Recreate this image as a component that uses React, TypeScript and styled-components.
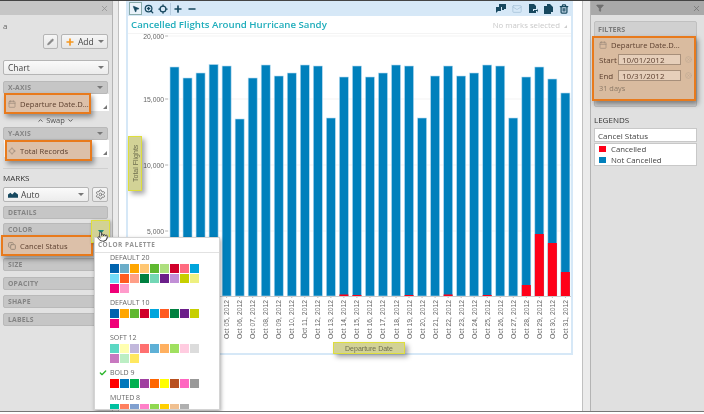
import React from "react";
import styled, { createGlobalStyle } from "styled-components";
import { Check, Pointer, Settings, ChevronUp, ChevronDown, Pencil, Plus, X, Minus, ZoomIn, Locate, MousePointer2, Mail, Trash2, Filter, Calendar, CircleX, Copy } from "lucide-react";

const GlobalStyle = createGlobalStyle`
  html, body { margin: 0; padding: 0; background: #fff; }
  body { font-family: "Open Sans", "Liberation Sans", sans-serif; }
`;

const barTops = [66, 77, 72, 63.5, 65, 118, 77, 64, 75, 72, 64, 65, 117, 76, 65, 76, 72, 64, 65, 117, 75, 65, 75, 72, 64, 65, 117, 76, 66, 78, 92];
const redTops: Record<number, number> = { 13: 293.5, 14: 294, 18: 294, 21: 293.5, 24: 294, 27: 284, 28: 233, 29: 242, 30: 271 };
const BASE_Y = 295;

const palettes = [
  { name: "Default 20", colors: ["#0063ae", "#6badc9", "#ffa600", "#ffc773", "#5fb830", "#addf7e", "#d0002a", "#ff6b80", "#00a5dc", "#72dcf8", "#ff5b21", "#ff9f88", "#008040", "#73d7b5", "#6b1f8a", "#c18fd6", "#c7cf00", "#eef080", "#f00078", "#ff9bcb"] },
  { name: "Default 10", colors: ["#0063ae", "#ffa600", "#5fb830", "#d0002a", "#00a5dc", "#ff5b21", "#008040", "#6b1f8a", "#c7cf00", "#f00078"] },
  { name: "Soft 12", colors: ["#5cd8c4", "#ffffb0", "#c2b8dc", "#ff7070", "#5eb0d6", "#ffb060", "#a0e060", "#ffcce0", "#dcdcdc", "#c878c0", "#bceec4", "#ffe860"] },
  { name: "Bold 9", checked: true, colors: ["#ff0000", "#0077bb", "#00b050", "#a040a0", "#ff6600", "#ffff00", "#b85020", "#ff66c0", "#999999"] },
  { name: "Muted 8", colors: ["#00c0a0", "#ff8060", "#80a0d0", "#ff80c8", "#90d850", "#ffd000", "#f0c090", "#b0b0b0"] },
];

const Shell = styled.div`
  position: relative;
  width: 704px;
  height: 412px;
  display: flex;
  overflow: hidden;
  background: #fff;
  border-top: 1px solid #444;
  border-bottom: 1px solid #777;
  box-sizing: border-box;
  color: #444;
  filter: blur(0.3px);
`;

const LeftPanel = styled.aside`
  width: 113px;
  flex: none;
  background: #e2e2e2;
  border-right: 1px solid #b4b4b4;
  box-sizing: border-box;
  padding: 0 4px 0 3px;
`;

const PanelHeader = styled.div`
  height: 14px;
  margin: 0 -4px 0 -3px;
  background: #c6c6c6;
  display: flex;
  align-items: center;
  justify-content: space-between;
  padding: 0 3px 0 5px;
  color: #8f8f8f;
`;

const RightHeader = styled(PanelHeader)`
  margin: 0 -7px 0 -3px;
  background: #a9a9a9;
  color: #707070;
`;

const CutLabel = styled.div`
  height: 19px;
  line-height: 21px;
  font-size: 8px;
  color: #666;
`;

const ButtonRow = styled.div`
  display: flex;
  justify-content: flex-end;
  gap: 3px;
`;

const ToolButton = styled.div<{ $w: number }>`
  width: ${(p) => p.$w}px;
  height: 15px;
  box-sizing: border-box;
  border: 1px solid #b5b5b5;
  border-radius: 2px;
  background: linear-gradient(#f6f6f6, #e6e6e6);
  display: flex;
  align-items: center;
  gap: 3px;
  padding: 0 3px;
  font-size: 8.5px;
  color: #444;
`;

const GearButton = styled(ToolButton)`
  justify-content: center;
  padding: 0;
`;

const Caret = styled.span`
  margin-left: auto;
  width: 0;
  height: 0;
  border-left: 3px solid transparent;
  border-right: 3px solid transparent;
  border-top: 3px solid #777;
`;

const Select = styled(ToolButton)<{ $top: number }>`
  margin-top: ${(p) => p.$top}px;
  background: linear-gradient(#fafafa, #ececec);
  padding: 0 4px;
`;

const MarksRow = styled.div`
  display: flex;
  gap: 3px;
  margin-top: 3px;
`;

const Well = styled.div<{ $top: number }>`
  position: relative;
  width: 104px;
  margin-top: ${(p) => p.$top}px;
`;

const WellBar = styled.div`
  height: 13px;
  box-sizing: border-box;
  width: 105px;
  background: #c6c6c6;
  border: 1px solid #b9b9b9;
  border-radius: 2px;
  padding: 0 4px;
  display: flex;
  align-items: center;
  justify-content: space-between;
  font-size: 6.8px;
  font-weight: 700;
  letter-spacing: 0.2px;
  color: #848484;
`;

const DropArea = styled.div`
  height: 17px;
  background: #fff;
  margin-right: -2px;
  margin-left: 1px;
  position: relative;
  &::after {
    content: "";
    position: absolute;
    right: 2px;
    bottom: 2px;
    border-left: 4px solid transparent;
    border-bottom: 4px solid #777;
  }
`;

const Highlight = styled.div<{ $left: number; $top: number; $w: number; $pad: number }>`
  position: absolute;
  left: ${(p) => p.$left}px;
  top: ${(p) => p.$top}px;
  width: ${(p) => p.$w}px;
  height: 21px;
  box-sizing: border-box;
  border: 2px solid #e87a1c;
  background: #dcc0a9;
  box-shadow: 2px 3px 5px rgba(0, 0, 0, 0.4);
  display: flex;
  align-items: center;
  gap: 4px;
  padding-left: ${(p) => p.$pad}px;
  font-size: 7.6px;
  color: #5d4030;
  white-space: nowrap;
  overflow: hidden;
  z-index: 2;
  svg {
    flex: none;
  }
`;

const SwapRow = styled.div`
  margin-top: 3px;
  height: 12px;
  display: flex;
  align-items: center;
  justify-content: center;
  gap: 2px;
  font-size: 7.5px;
  color: #555;
`;

const Separator = styled.div`
  height: 1px;
  margin-top: 11px;
  background: #cfcfcf;
`;

const MarksLabel = styled.div`
  margin-top: 2px;
  height: 13px;
  line-height: 13px;
  font-size: 8px;
  color: #333;
`;

const ColorWell = styled(Well)`
  height: 33px;
`;

const LeftGutter = styled.div`
  width: 13px;
  flex: none;
`;

const RightGutter = styled.div`
  width: 17px;
  flex: none;
  display: flex;
  justify-content: flex-end;
`;

const GutterBand = styled.div<{ $w: number }>`
  width: ${(p) => p.$w}px;
  height: 100%;
  background: #ebebeb;
  box-sizing: border-box;
`;

const LeftBand = styled(GutterBand)`
  border-right: 1px solid #c0c0c0;
`;

const RightBand = styled(GutterBand)`
  border-left: 1px solid #c0c0c0;
`;

const ChartPanel = styled.main`
  width: 447px;
  height: 354px;
  flex: none;
  box-sizing: border-box;
  border: 2px solid #d6e8f7;
  border-top: 0;
  background: #fff;
  display: flex;
  flex-direction: column;
`;

const Toolbar = styled.div`
  height: 15px;
  margin: 0 -2px;
  background: #d6e8f7;
  display: flex;
  align-items: center;
  padding: 0 4px 0 3px;
  color: #17485f;
  flex: none;
`;

const ToolGroup = styled.div`
  display: flex;
  align-items: center;
  gap: 4px;
`;

const SelectTool = styled.div`
  width: 13px;
  height: 13px;
  margin-right: -2px;
  box-sizing: border-box;
  border: 1px solid #8aa;
  background: #e9f2fa;
  display: flex;
  align-items: center;
  justify-content: center;
`;

const ToolDivider = styled.div`
  width: 1px;
  height: 12px;
  margin: 0 -2px;
  background: #b6ccdf;
`;

const RightTools = styled(ToolGroup)`
  margin-left: auto;
  gap: 6px;
`;

const TitleRow = styled.div`
  height: 17px;
  flex: none;
  display: flex;
  align-items: center;
  justify-content: space-between;
  padding: 0 4px 0 3px;
  border-bottom: 1px solid #f4f4f4;
`;

const ChartTitle = styled.div`
  font-size: 9.7px;
  font-weight: 600;
  color: #1fadbb;
`;

const Selection = styled.div`
  position: relative;
  font-size: 7.8px;
  color: #c9c9c9;
  padding-right: 7px;
  &::after {
    content: "";
    position: absolute;
    right: 0;
    bottom: 2px;
    border-left: 3px solid transparent;
    border-bottom: 3px solid #ccc;
  }
`;

const PlotSvg = styled.svg`
  display: block;
  flex: none;
`;

const AxisText = styled.text`
  font-family: "Liberation Sans", Arial, sans-serif;
  font-size: 6.8px;
  fill: #666;
`;

const Callout = styled.div`
  position: absolute;
  background: #d2d296;
  border: 1px solid #dede3c;
  box-sizing: border-box;
  box-shadow: 3px 3px 5px rgba(0, 0, 0, 0.35);
  color: #6e6e4e;
  font-family: "Liberation Sans", Arial, sans-serif;
  font-size: 7px;
  display: flex;
  align-items: center;
  justify-content: center;
  z-index: 3;
`;

const YCallout = styled(Callout)`
  left: 128px;
  top: 135px;
  width: 14px;
  height: 55px;
  writing-mode: vertical-rl;
  transform: rotate(180deg);
  box-shadow: -3px -3px 5px rgba(0, 0, 0, 0.35);
`;

const XCallout = styled(Callout)`
  left: 333px;
  top: 341px;
  width: 72px;
  height: 12px;
`;

const ColorTrigger = styled(Callout)`
  left: 91px;
  top: 219px;
  width: 19px;
  height: 23px;
  box-shadow: 1px 1px 3px rgba(0, 0, 0, 0.3);
`;

const TriggerCaret = styled.span`
  width: 0;
  height: 0;
  border-left: 3.5px solid transparent;
  border-right: 3.5px solid transparent;
  border-top: 4px solid #1c8a7c;
`;

const HandCursor = styled.div`
  position: absolute;
  left: 97px;
  top: 230px;
  z-index: 6;
  display: flex;
  color: #333;
`;

const Popover = styled.div`
  position: absolute;
  left: 94px;
  top: 236px;
  width: 126px;
  height: 173px;
  box-sizing: border-box;
  background: #fff;
  border: 1px solid #d4d4d4;
  box-shadow: 1px 2px 4px rgba(0, 0, 0, 0.35);
  overflow: hidden;
  z-index: 5;
`;

const PopoverTitle = styled.div`
  height: 14px;
  line-height: 14px;
  padding-left: 3px;
  border-bottom: 1px solid #e2e2e2;
  font-size: 6.4px;
  font-weight: 700;
  letter-spacing: 0.55px;
  color: #969696;
`;

const PaletteList = styled.div`
  display: flex;
  flex-direction: column;
  gap: 5px;
  padding: 0 0 0 15px;
`;

const PaletteName = styled.div`
  position: relative;
  height: 10px;
  line-height: 10px;
  font-size: 7px;
  text-transform: uppercase;
  color: #666;
`;

const CheckMark = styled.span`
  position: absolute;
  left: -11px;
  top: 1px;
  display: flex;
  color: #2bb52b;
`;

const SwatchGrid = styled.div`
  margin-top: 1px;
  display: grid;
  grid-template-columns: repeat(9, 9px);
  grid-auto-rows: 9px;
  gap: 1px;
`;

const Swatch = styled.div<{ $c: string }>`
  background: ${(p) => p.$c};
`;

const RightPanel = styled.aside`
  width: 114px;
  flex: none;
  background: #e0e0e0;
  border-left: 1px solid #b4b4b4;
  box-sizing: border-box;
  padding: 0 7px 0 3px;
`;

const FiltersCard = styled.div`
  position: relative;
  height: 84px;
  margin-top: 6px;
  border: 1px solid #c0c0c0;
  border-radius: 2px;
  background: #d0d0d0;
`;

const FiltersTitle = styled.div`
  height: 14px;
  line-height: 14px;
  padding-left: 3px;
  font-size: 7.2px;
  font-weight: 700;
  color: #7c7c7c;
`;

const FilterBox = styled.div`
  position: absolute;
  left: -3px;
  top: 14px;
  width: 104px;
  height: 65px;
  box-sizing: border-box;
  border: 2px solid #e87a1c;
  background: #d9bb9f;
  box-shadow: 2px 3px 5px rgba(0, 0, 0, 0.4);
  padding: 0 0 0 5px;
  color: #5d4030;
  font-size: 8px;
`;

const FilterName = styled.div`
  height: 13px;
  display: flex;
  align-items: center;
  gap: 4px;
  font-size: 7.6px;
`;

const DateRow = styled.div`
  display: flex;
  align-items: center;
  height: 16px;
`;

const DateLabel = styled.span`
  width: 19px;
`;

const DateInput = styled.div`
  width: 63px;
  height: 11px;
  line-height: 10px;
  box-sizing: border-box;
  border: 1px solid #a78f7a;
  background: #e6cfba;
  padding-left: 3px;
  font-size: 8px;
  color: #5d4030;
`;

const ClearIcon = styled.span`
  display: flex;
  margin-left: 4px;
  color: #bda792;
`;

const DaysText = styled.div`
  height: 10px;
  line-height: 10px;
  font-size: 7.4px;
  color: #8c7a68;
`;

const LegendsTitle = styled.div`
  margin-top: 7px;
  height: 12px;
  line-height: 12px;
  font-size: 8px;
  color: #333;
`;

const LegendHead = styled.div`
  margin-top: 2px;
  height: 14px;
  line-height: 13px;
  box-sizing: border-box;
  border: 1px solid #c8c8c8;
  background: #fff;
  padding-left: 3px;
  font-size: 8px;
  color: #444;
`;

const LegendBody = styled.div`
  margin-top: 1px;
  height: 23px;
  box-sizing: border-box;
  border: 1px solid #c8c8c8;
  background: #fff;
  padding: 0 0 0 4px;
  display: flex;
  flex-direction: column;
  justify-content: center;
  gap: 1px;
`;

const LegendRow = styled.div`
  display: flex;
  align-items: center;
  gap: 5px;
  height: 10px;
  font-size: 7.8px;
  color: #444;
`;

const LegendKey = styled.span<{ $c: string }>`
  width: 7px;
  height: 6px;
  background: ${(p) => p.$c};
`;

function Plot() {
  const ticks = [
    { y: 35, label: "20,000" },
    { y: 98, label: "15,000" },
    { y: 164, label: "10,000" },
    { y: 230, label: "5,000" },
  ];
  return (
    <PlotSvg width={443} height={322} viewBox="128 33 443 322">
      {ticks.map((t) => (
        <g key={t.y}>
          <line x1={166} x2={571} y1={t.y} y2={t.y} stroke="#f3f3f3" />
          <line x1={165} x2={168} y1={t.y} y2={t.y} stroke="#bbb" />
          <AxisText x={164} y={t.y + 2.5} textAnchor="end">{t.label}</AxisText>
        </g>
      ))}
      {barTops.map((top, i) => {
        const x = 170 + i * 13.03;
        const red = redTops[i];
        const day = String(i + 1).padStart(2, "0");
        return (
          <g key={i}>
            <rect x={x} y={top} width={9} height={BASE_Y - top} fill="#0080bc" stroke="#b5daf0" strokeWidth={0.6} />
            {red && <rect x={x} y={red} width={9} height={BASE_Y - red} fill="#ff0018" />}
            <line x1={x + 4.5} x2={x + 4.5} y1={295} y2={297} stroke="#bbb" />
            <AxisText transform={`translate(${x + 7} 299) rotate(-90)`} textAnchor="end">{`Oct ${day}, 2012`}</AxisText>
          </g>
        );
      })}
      <line x1={166} x2={571} y1={295.5} y2={295.5} stroke="#ccc" />
    </PlotSvg>
  );
}

function Palette({ name, colors, checked }: { name: string; colors: string[]; checked?: boolean }) {
  return (
    <div>
      <PaletteName>
        {checked && (
          <CheckMark>
            <Check size={8} strokeWidth={4} />
          </CheckMark>
        )}
        {name}
      </PaletteName>
      <SwatchGrid>
        {colors.map((c, i) => (
          <Swatch key={i} $c={c} />
        ))}
      </SwatchGrid>
    </div>
  );
}

export default function App() {
  return (
    <>
      <GlobalStyle />
      <Shell>
        <LeftPanel>
          <PanelHeader>
            <span />
            <X size={9} strokeWidth={2} />
          </PanelHeader>
          <CutLabel>a</CutLabel>
          <ButtonRow>
            <ToolButton $w={15}>
              <Pencil size={8} color="#888" fill="#888" />
            </ToolButton>
            <ToolButton $w={47}>
              <Plus size={10} color="#f5961e" strokeWidth={4} />
              Add
              <Caret />
            </ToolButton>
          </ButtonRow>
          <Select $w={106} $top={11}>
            Chart
            <Caret />
          </Select>
          <Well $top={6}>
            <WellBar>
              X-AXIS
              <Caret />
            </WellBar>
            <DropArea />
            <Highlight $left={1} $top={12} $w={87} $pad={2}>
              <Calendar size={8} color="#9b8a7a" />
              Departure Date.D...
            </Highlight>
          </Well>
          <SwapRow>
            <ChevronUp size={7} strokeWidth={3} />
            Swap
            <ChevronDown size={7} strokeWidth={3} />
          </SwapRow>
          <Well $top={1}>
            <WellBar>
              Y-AXIS
              <Caret />
            </WellBar>
            <DropArea />
            <Highlight $left={2} $top={13} $w={87} $pad={1}>
              <Locate size={8} color="#9b8a7a" />
              Total Records
            </Highlight>
          </Well>
          <Separator />
          <MarksLabel>MARKS</MarksLabel>
          <MarksRow>
            <Select $w={87} $top={0}>
              <svg width="10" height="7" viewBox="0 0 12 8">
                <path d="M0 8V4l3-2 2 2 3-3 4 3v4z" fill="#17485f" />
              </svg>
              Auto
              <Caret />
            </Select>
            <GearButton $w={16}>
              <Settings size={11} color="#777" />
            </GearButton>
          </MarksRow>
          <Well $top={4}>
            <WellBar>DETAILS</WellBar>
          </Well>
          <ColorWell $top={4}>
            <WellBar>COLOR</WellBar>
            <Highlight $left={-2} $top={12} $w={92} $pad={5}>
              <Copy size={8} color="#9b8a7a" strokeWidth={3} />
              Cancel Status
            </Highlight>
          </ColorWell>
          <Well $top={2}>
            <WellBar>SIZE</WellBar>
          </Well>
          <Well $top={6}>
            <WellBar>OPACITY</WellBar>
          </Well>
          <Well $top={5}>
            <WellBar>SHAPE</WellBar>
          </Well>
          <Well $top={5}>
            <WellBar>LABELS</WellBar>
          </Well>
        </LeftPanel>
        <LeftGutter>
          <LeftBand $w={6} />
        </LeftGutter>
        <ChartPanel>
          <Toolbar>
            <ToolGroup>
              <SelectTool>
                <MousePointer2 size={8} fill="#17485f" />
              </SelectTool>
              <ZoomIn size={10} strokeWidth={3} />
              <Locate size={10} strokeWidth={3} />
              <ToolDivider />
              <Plus size={10} strokeWidth={4} />
              <Minus size={10} strokeWidth={4} />
            </ToolGroup>
            <RightTools>
              <svg width="10" height="9" viewBox="0 0 10 9">
                <path d="M3 0h7v5H8v1H6V3H3zM0 3h5v4H2L0 9z" fill="#17485f" />
              </svg>
              <Mail size={10} color="#a8c4da" />
              <svg width="10" height="10" viewBox="0 0 10 10">
                <path d="M1 0h5l2 2v3H5v2h3v2H1z" fill="#17485f" />
                <path d="M6 6h3V4.500l1 2-1 2V7H6z" fill="#17485f" />
              </svg>
              <svg width="9" height="10" viewBox="0 0 9 10">
                <path d="M3 0h3l3 3v5H7v2H0V2h3z" fill="#17485f" />
              </svg>
              <Trash2 size={10} strokeWidth={3} />
            </RightTools>
          </Toolbar>
          <TitleRow>
            <ChartTitle>Cancelled Flights Around Hurricane Sandy</ChartTitle>
            <Selection>No marks selected</Selection>
          </TitleRow>
          <Plot />
        </ChartPanel>
        <RightGutter>
          <RightBand $w={8} />
        </RightGutter>
        <RightPanel>
          <RightHeader>
            <Filter size={8} fill="currentColor" />
            <X size={9} strokeWidth={2} />
          </RightHeader>
          <FiltersCard>
            <FiltersTitle>FILTERS</FiltersTitle>
            <FilterBox>
              <FilterName>
                <Calendar size={8} color="#9b8a7a" />
                Departure Date.D...
              </FilterName>
              <DateRow>
                <DateLabel>Start</DateLabel>
                <DateInput>10/01/2012</DateInput>
                <ClearIcon>
                  <CircleX size={7} />
                </ClearIcon>
              </DateRow>
              <DateRow>
                <DateLabel>End</DateLabel>
                <DateInput>10/31/2012</DateInput>
                <ClearIcon>
                  <CircleX size={7} />
                </ClearIcon>
              </DateRow>
              <DaysText>31 days</DaysText>
            </FilterBox>
          </FiltersCard>
          <LegendsTitle>LEGENDS</LegendsTitle>
          <LegendHead>Cancel Status</LegendHead>
          <LegendBody>
            <LegendRow>
              <LegendKey $c="#ff0018" />
              Cancelled
            </LegendRow>
            <LegendRow>
              <LegendKey $c="#0080bc" />
              Not Cancelled
            </LegendRow>
          </LegendBody>
        </RightPanel>
        <YCallout>Total Flights</YCallout>
        <XCallout>Departure Date</XCallout>
        <ColorTrigger>
          <TriggerCaret />
        </ColorTrigger>
        <HandCursor>
          <Pointer size={11} fill="#fff" />
        </HandCursor>
        <Popover>
          <PopoverTitle>COLOR PALETTE</PopoverTitle>
          <PaletteList>
            {palettes.map((p) => (
              <Palette key={p.name} name={p.name} colors={p.colors} checked={p.checked} />
            ))}
          </PaletteList>
        </Popover>
      </Shell>
    </>
  );
}
